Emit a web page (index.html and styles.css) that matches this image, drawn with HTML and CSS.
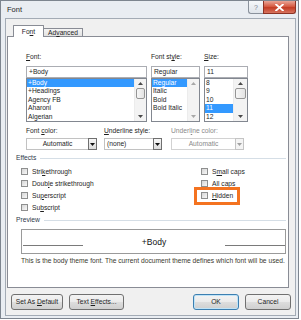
FILE: index.html
```html
<!DOCTYPE html>
<html>
<head>
<meta charset="utf-8">
<title>Font</title>
<link rel="stylesheet" href="styles.css">
</head>
<body>
<div class="win">
  <div class="titlebar">
    <span class="title">Font</span>
    <div class="caption-btns">
      <span class="cbtn help">?</span>
      <span class="cbtn close"><svg width="9" height="7" viewBox="0 0 9 7"><path d="M1.2 0.6 L7.8 6.4 M7.8 0.6 L1.2 6.4" stroke="#fff" stroke-width="1.9" stroke-linecap="square"/></svg></span>
    </div>
  </div>
  <div class="client">
    <div class="tabs">
      <div class="tab active">Fo<u>n</u>t</div>
      <div class="tab idle">Ad<u>v</u>anced</div>
    </div>
    <div class="panel">
      <div class="fontrow">
        <div class="col c-font">
          <div class="lbl"><u>F</u>ont:</div>
          <div class="input">+Body</div>
          <div class="list">
            <div class="items">
              <div class="item sel">+Body</div>
              <div class="item">+Headings</div>
              <div class="item">Agency FB</div>
              <div class="item">Aharoni</div>
              <div class="item">Algerian</div>
            </div>
            <div class="sb">
              <div class="arr"><svg width="5" height="3" viewBox="0 0 5 3"><polygon points="0,3 2.5,0 5,3" fill="#4a4a4a"/></svg></div>
              <div class="thumb"></div>
              <div class="track"></div>
              <div class="arr"><svg width="5" height="3" viewBox="0 0 5 3"><polygon points="0,0 5,0 2.5,3" fill="#4a4a4a"/></svg></div>
            </div>
          </div>
        </div>
        <div class="col c-style">
          <div class="lbl">Font st<u>y</u>le:</div>
          <div class="input">Regular</div>
          <div class="list">
            <div class="items">
              <div class="item sel">Regular</div>
              <div class="item">Italic</div>
              <div class="item">Bold</div>
              <div class="item">Bold Italic</div>
            </div>
            <div class="sb">
              <div class="arr"><svg width="5" height="3" viewBox="0 0 5 3"><polygon points="0,3 2.5,0 5,3" fill="#a8a8a8"/></svg></div>
              <div class="track"></div>
              <div class="arr"><svg width="5" height="3" viewBox="0 0 5 3"><polygon points="0,0 5,0 2.5,3" fill="#a8a8a8"/></svg></div>
            </div>
          </div>
        </div>
        <div class="col c-size">
          <div class="lbl"><u>S</u>ize:</div>
          <div class="input">11</div>
          <div class="list">
            <div class="items">
              <div class="item">8</div>
              <div class="item">9</div>
              <div class="item">10</div>
              <div class="item sel">11</div>
              <div class="item">12</div>
            </div>
            <div class="sb">
              <div class="arr"><svg width="5" height="3" viewBox="0 0 5 3"><polygon points="0,3 2.5,0 5,3" fill="#4a4a4a"/></svg></div>
              <div class="thumb"></div>
              <div class="track"></div>
              <div class="arr"><svg width="5" height="3" viewBox="0 0 5 3"><polygon points="0,0 5,0 2.5,3" fill="#4a4a4a"/></svg></div>
            </div>
          </div>
        </div>
      </div>

      <div class="selrow">
        <div class="scol s-color">
          <div class="lbl">Font <u>c</u>olor:</div>
          <div class="select">
            <span class="val center">Automatic</span>
            <span class="dd"><svg width="5" height="3" viewBox="0 0 5 3"><polygon points="0,0 5,0 2.5,3" fill="#111"/></svg></span>
          </div>
        </div>
        <div class="scol s-ustyle">
          <div class="lbl"><u>U</u>nderline style:</div>
          <div class="select">
            <span class="val">(none)</span>
            <span class="dd"><svg width="5" height="3" viewBox="0 0 5 3"><polygon points="0,0 5,0 2.5,3" fill="#111"/></svg></span>
          </div>
        </div>
        <div class="scol s-ucolor">
          <div class="lbl dis">Underl<u>i</u>ne color:</div>
          <div class="select disabled">
            <span class="val center">Automatic</span>
            <span class="dd"><svg width="5" height="3" viewBox="0 0 5 3"><polygon points="0,0 5,0 2.5,3" fill="#a0a0a0"/></svg></span>
          </div>
        </div>
      </div>

      <div class="ghead"><span>Effects</span><span class="gline"></span></div>
      <div class="checks">
        <div class="ccol left">
          <div class="chk"><span class="box"></span>Stri<u>k</u>ethrough</div>
          <div class="chk"><span class="box"></span>Doub<u>l</u>e strikethrough</div>
          <div class="chk"><span class="box"></span>Su<u>p</u>erscript</div>
          <div class="chk"><span class="box"></span>Su<u>b</u>script</div>
        </div>
        <div class="ccol right">
          <div class="chk"><span class="box"></span>S<u>m</u>all caps</div>
          <div class="chk"><span class="box"></span><u>A</u>ll caps</div>
          <div class="chk"><span class="box"></span><u>H</u>idden<span class="hl"></span></div>
        </div>
      </div>

      <div class="ghead pv-head"><span>Preview</span><span class="gline"></span></div>
      <div class="preview">
        <span class="pl"></span>
        <span class="pt">+Body</span>
        <span class="pl"></span>
      </div>
      <div class="desc">This is the body theme font. The current document theme defines which font will be used.</div>
    </div>

    <div class="btns">
      <div class="btn b-default">Set As <u>D</u>efault</div>
      <div class="btn b-effects">Text <u>E</u>ffects...</div>
      <div class="btn b-ok">OK</div>
      <div class="btn b-cancel">Cancel</div>
    </div>
  </div>
</div>
</body>
</html>
```

FILE: styles.css
```css
* { box-sizing: border-box; }
html, body { margin: 0; padding: 0; background: #ffffff; }
body {
  font-family: "Liberation Sans", Arial, sans-serif;
  font-size: 6.7px;
  color: #1e1e1e;
  width: 301px;
  height: 320px;
  overflow: hidden;
}
u { text-decoration: underline; text-underline-offset: 1px; text-decoration-thickness: 0.6px; }

.win {
  width: 299px;
  height: 319px;
  border: 1px solid #7d858f;
  background: #e9edf2;
  display: flex;
  flex-direction: column;
}

.titlebar { height: 17px; display: flex; align-items: flex-start; flex: none; }
.title { font-size: 7.5px; line-height: 17px; padding-left: 6px; color: #1e1e1e; }
.caption-btns { margin-left: auto; margin-right: 2px; display: flex; }
.cbtn {
  height: 13px;
  display: flex;
  align-items: center;
  justify-content: center;
  border: 1px solid #8a929c;
  border-top: none;
}
.help {
  width: 15px;
  background: linear-gradient(#f6f8fa, #dfe4ea);
  border-radius: 0 0 0 3px;
  color: #7a8490;
  font-size: 7px;
  border-right: none;
}
.close {
  width: 33px;
  background: linear-gradient(#e9a596, #d65c44 45%, #c33c24 55%, #d7745f);
  border-color: #8c3325;
  border-radius: 0 0 3px 0;
}

.client {
  margin-left: 4px;
  width: 291px;
  height: 298px;
  border: 1px solid #a3abb5;
  background: #f0f0f0;
  padding-top: 6px;
  flex: none;
}

.tabs { height: 11px; display: flex; align-items: flex-end; padding-left: 7px; }
.tab {
  border: 1px solid #898c95;
  border-bottom: none;
  text-align: center;
  white-space: nowrap;
}
.tab.active {
  width: 31px;
  height: 12px;
  margin-bottom: -1px;
  background: #ffffff;
  position: relative;
  z-index: 1;
  line-height: 11px;
  border-radius: 1px 1px 0 0;
}
.tab.idle {
  width: 39px;
  height: 8px;
  line-height: 8px;
  background: linear-gradient(#f4f4f4, #e2e2e2);
  border-left: none;
}

.panel {
  margin-left: 1px;
  width: 282px;
  height: 252px;
  border: 1px solid #898c95;
  background: #ffffff;
  padding: 15px 2px 0 18px;
}

.lbl { height: 10px; line-height: 10px; white-space: nowrap; }
.lbl.dis { color: #8a8a8a; }

.fontrow { display: flex; gap: 4px; }
.c-font { width: 121px; }
.c-style { width: 49px; }
.c-size { width: 44px; }

.input {
  margin-top: 4px;
  height: 12px;
  border: 1px solid #abadb3;
  line-height: 10px;
  padding-left: 2px;
  white-space: nowrap;
}
.list {
  height: 44px;
  border: 1px solid #828790;
  display: flex;
  overflow: hidden;
}
.items { flex: 1; min-width: 0; }
.item { height: 8.4px; line-height: 8.4px; padding-left: 1px; white-space: nowrap; }
.item.sel { background: #3399ff; color: #ffffff; }

.sb {
  width: 12px;
  background: #f3f3f3;
  border-left: 1px solid #ececec;
  display: flex;
  flex-direction: column;
  align-items: center;
  flex: none;
}
.c-size .sb { width: 14px; }
.arr { height: 9px; width: 100%; display: flex; align-items: center; justify-content: center; }
.arr svg { display: block; }
.thumb {
  width: 9px;
  height: 11px;
  border: 1px solid #959595;
  border-radius: 2px;
  background: linear-gradient(90deg, #f7f7f7, #e3e3e3);
}
.c-size .thumb { width: 11px; }
.track { flex: 1; }

.selrow { display: flex; margin-top: 4px; }
.s-color { width: 71px; }
.s-ustyle { width: 58px; margin-left: 7px; }
.s-ucolor { width: 73px; margin-left: 9px; }
.select {
  margin-top: 2px;
  height: 12px;
  border: 1px solid #c2c2c2;
  display: flex;
  background: #ffffff;
}
.select .val { flex: 1; line-height: 10px; padding-left: 2px; white-space: nowrap; }
.select .val.center { text-align: center; padding-left: 0; }
.select .dd {
  width: 9px;
  height: 12px;
  margin: -1px -1px 0 0;
  border: 1px solid #6f6f6f;
  background: linear-gradient(#f7f7f7, #dcdcdc);
  display: flex;
  align-items: center;
  justify-content: center;
  flex: none;
}
.select.disabled { border-color: #d2d2d2; }
.select.disabled .val { color: #8a8a8a; }
.select.disabled .dd { border-color: #c4c4c4; background: #f4f4f4; }

.ghead {
  display: flex;
  align-items: center;
  margin-left: -10px;
  margin-top: 3px;
  height: 10px;
  line-height: 10px;
  color: #2e3a4c;
}
.ghead .gline { flex: 1; height: 1px; background: #d5dee6; margin-left: 4px; }
.pv-head { margin-top: 2px; }

.checks { display: flex; margin-left: -5px; margin-top: 2px; }
.ccol.left { width: 180px; }
.chk {
  height: 12px;
  display: flex;
  align-items: center;
  position: relative;
  white-space: nowrap;
}
.box {
  width: 7px;
  height: 7px;
  border: 1px solid #8e8f8f;
  background: linear-gradient(135deg, #d6d6d6, #f8f8f8);
  margin-right: 4px;
  flex: none;
}
.hl {
  position: absolute;
  left: -7px;
  top: -2px;
  width: 46px;
  height: 18px;
  border: 3px solid #f47320;
}

.preview {
  margin-left: -5px;
  margin-top: 4px;
  width: 265px;
  height: 25px;
  border: 1px solid #9a9a9a;
  display: flex;
  justify-content: space-between;
  align-items: flex-start;
  padding-left: 1px;
}
.pl { width: 60px; height: 1px; background: #7a7a7a; margin-top: 15px; }
.pt { font-size: 8.5px; line-height: 10px; margin-top: 7px; color: #111; }

.desc {
  margin-left: -5px;
  margin-top: 2px;
  line-height: 10px;
  white-space: nowrap;
  color: #3a3a2e;
}

.btns { display: flex; margin-top: 6px; padding-left: 5px; padding-right: 4px; }
.btn {
  height: 16px;
  border: 1px solid #707070;
  border-radius: 3px;
  background: linear-gradient(#f3f3f3 0%, #ebebeb 48%, #dddddd 52%, #cfcfcf 100%);
  text-align: center;
  line-height: 14px;
  white-space: nowrap;
}
.b-default { width: 52px; }
.b-effects { width: 55px; margin-left: 6px; }
.b-ok {
  width: 46px;
  margin-left: auto;
  border-color: #3c7fb1;
  box-shadow: inset 0 0 0 1px #bfe3f7;
}
.b-cancel { width: 46px; margin-left: 6px; }
```
